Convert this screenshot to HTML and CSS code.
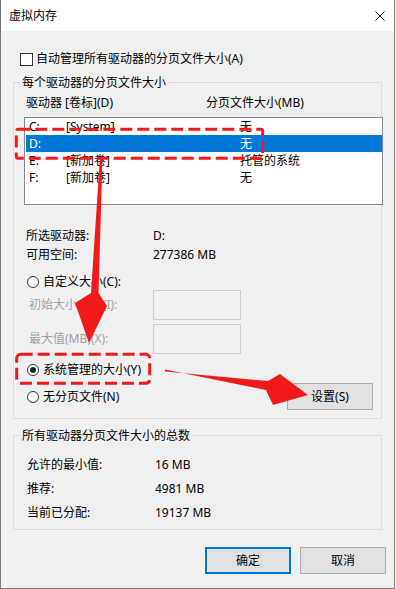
FILE: index.html
```html
<!DOCTYPE html>
<html lang="zh-CN">
<head>
<meta charset="utf-8">
<title>虚拟内存</title>
<link rel="stylesheet" href="styles.css">
</head>
<body>
<div class="window">
  <div class="titlebar">
    <span class="title">虚拟内存</span>
    <svg class="close" width="10" height="10" viewBox="0 0 10 10"><path d="M0.5 0.5L9.5 9.5M9.5 0.5L0.5 9.5" stroke="#111" stroke-width="1" fill="none"/></svg>
  </div>
  <div class="content">
    <div class="check-row"><span class="checkbox"></span><span>自动管理所有驱动器的分页文件大小(A)</span></div>

    <fieldset class="group g1">
      <legend>每个驱动器的分页文件大小</legend>
      <div class="gbody">
        <div class="list-head"><span class="h1">驱动器 [卷标](D)</span><span>分页文件大小(MB)</span></div>
        <div class="list">
          <div class="row"><span class="c-drive">C:</span><span class="c-label">[System]</span><span>无</span></div>
          <div class="row selected"><span class="c-drive">D:</span><span class="c-label"></span><span>无</span></div>
          <div class="row"><span class="c-drive">E:</span><span class="c-label">[新加卷]</span><span>托管的系统</span></div>
          <div class="row"><span class="c-drive">F:</span><span class="c-label">[新加卷]</span><span>无</span></div>
        </div>
        <div class="info">
          <div class="info-row"><span class="k">所选驱动器:</span><span>D:</span></div>
          <div class="info-row"><span class="k">可用空间:</span><span>277386 MB</span></div>
        </div>
        <div class="radio-row r-custom"><span class="radio"></span><span>自定义大小(C):</span></div>
        <div class="field-row"><span class="fk">初始大小(MB)(I):</span><span class="input"></span></div>
        <div class="field-row f2"><span class="fk">最大值(MB)(X):</span><span class="input"></span></div>
        <div class="radio-row r-system"><span class="radio checked"></span><span>系统管理的大小(Y)</span></div>
        <div class="last-row">
          <div class="radio-row"><span class="radio"></span><span>无分页文件(N)</span></div>
          <button class="btn btn-set">设置(S)</button>
        </div>
      </div>
    </fieldset>

    <fieldset class="group g2">
      <legend>所有驱动器分页文件大小的总数</legend>
      <div class="gbody">
        <div class="total-row"><span class="tk">允许的最小值:</span><span>16 MB</span></div>
        <div class="total-row"><span class="tk">推荐:</span><span>4981 MB</span></div>
        <div class="total-row"><span class="tk">当前已分配:</span><span>19137 MB</span></div>
      </div>
    </fieldset>

    <div class="actions">
      <button class="btn btn-primary">确定</button>
      <button class="btn">取消</button>
    </div>
  </div>
</div>

<svg class="annot" width="396" height="589" viewBox="0 0 396 589">
  <rect x="16.3" y="129.3" width="246.4" height="29" rx="2" fill="none" stroke="#f01a1a" stroke-width="3" stroke-dasharray="12 5"/>
  <rect x="16.7" y="354.3" width="133" height="29" rx="4" fill="none" stroke="#f01a1a" stroke-width="3" stroke-dasharray="12 5"/>
  <polygon points="100,157 102.5,157 98.5,293 107,306 89,343 75,303 91,293" fill="#f01a1a"/>
  <polygon points="165,369.5 165,371.5 268,381 280,374 308,395 273,405 266,390" fill="#f01a1a"/>
</svg>
</body>
</html>
```

FILE: styles.css
```css
html, body {
  margin: 0;
  padding: 0;
  background: #ffffff;
}

body {
  position: relative;
  font-family: "Noto Sans", "Noto Sans CJK SC", sans-serif;
  font-size: 12px;
  line-height: 16px;
  color: #000;
}

.window {
  width: 395px;
  height: 589px;
  box-sizing: border-box;
  border: 1px solid #777777;
  border-top: none;
  background: #f0f0f0;
  display: flex;
  flex-direction: column;
}

.titlebar {
  flex: none;
  height: 31px;
  background: #ffffff;
  display: flex;
  align-items: center;
  justify-content: space-between;
  padding: 0 9px 0 8px;
}

.close {
  display: block;
}

.content {
  display: flex;
  flex-direction: column;
  align-items: flex-start;
}

.check-row {
  display: flex;
  align-items: center;
  gap: 3px;
  height: 16px;
  margin: 20px 0 0 19px;
}

.checkbox {
  width: 13px;
  height: 13px;
  box-sizing: border-box;
  border: 1px solid #333333;
  background: #ffffff;
}

fieldset.group {
  margin: 0 0 0 12px;
  padding: 0;
  width: 369px;
  box-sizing: border-box;
  min-inline-size: 0;
  border: 1px solid #dcdcdc;
}

.group legend {
  margin-left: 6px;
  padding: 0 2px;
  height: 17px;
  line-height: 17px;
}

fieldset.group.g1 { margin-top: 7px; }
fieldset.group.g2 { margin-top: 8px; }

.gbody {
  display: flex;
  flex-direction: column;
  align-items: flex-start;
}

.g1 .gbody { padding: 4px 0 8px 10px; }
.g2 .gbody { padding: 10px 0 5px 13px; gap: 2px; }

.list-head {
  display: flex;
  height: 16px;
  padding-left: 2px;
}

.h1 { width: 180px; }

.list {
  margin-top: 6px;
  width: 359px;
  height: 88px;
  box-sizing: border-box;
  border: 1px solid #828790;
  background: #ffffff;
}

.row {
  display: flex;
  align-items: center;
  height: 17px;
  margin-left: 1px;
  padding-left: 3px;
}

.row.selected {
  background: #0078d7;
  color: #ffffff;
}

.c-drive { width: 37px; }
.c-label { width: 174px; }

.info {
  margin-top: 22px;
  display: flex;
  flex-direction: column;
  gap: 1px;
}

.info-row {
  display: flex;
  align-items: center;
  height: 18px;
  padding-left: 2px;
}

.k { width: 127px; }

.radio-row {
  display: flex;
  align-items: center;
  gap: 4px;
  height: 16px;
  padding-left: 3px;
}

.r-custom { margin-top: 10px; }
.r-system { margin-top: 8px; }

.radio {
  width: 12px;
  height: 12px;
  box-sizing: border-box;
  border: 1px solid #333333;
  border-radius: 50%;
  background: #ffffff;
  display: flex;
  align-items: center;
  justify-content: center;
}

.radio.checked::after {
  content: "";
  width: 6px;
  height: 6px;
  border-radius: 50%;
  background: #222222;
}

.field-row {
  display: flex;
  align-items: center;
  height: 30px;
  padding-left: 5px;
  color: #a0a0a0;
}

.f2 { margin-top: 4px; }

.fk { width: 124px; }

.input {
  width: 88px;
  height: 30px;
  box-sizing: border-box;
  border: 1px solid #cccccc;
  background: #f0f0f0;
}

.last-row {
  margin-top: 5px;
  align-self: stretch;
  display: flex;
  align-items: center;
  justify-content: space-between;
  height: 27px;
}

.btn {
  font: inherit;
  color: #000;
  width: 86px;
  height: 27px;
  box-sizing: border-box;
  border: 1px solid #adadad;
  background: #e1e1e1;
  padding: 0;
  margin: 0;
}

.btn-set { margin-right: 8px; }

.btn-primary {
  border: 2px solid #0078d7;
}

.total-row {
  display: flex;
  align-items: center;
  height: 22px;
}

.tk { width: 128px; }

.actions {
  margin-top: 17px;
  align-self: stretch;
  display: flex;
  justify-content: flex-end;
  gap: 9px;
  padding-right: 8px;
}

.annot {
  position: absolute;
  left: 0;
  top: 0;
  pointer-events: none;
}
```
